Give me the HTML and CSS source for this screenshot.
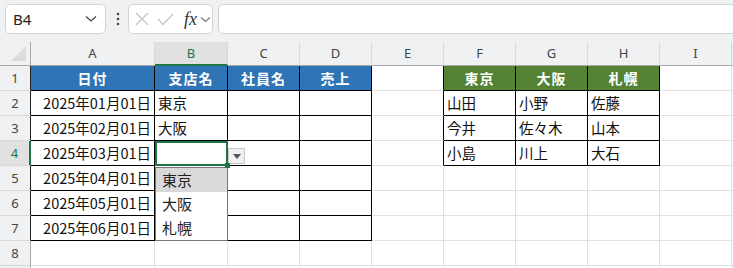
FILE: index.html
```html
<!DOCTYPE html>
<html lang="ja">
<head>
  <meta charset="UTF-8" />
  <title>Sheet</title>
  <link rel="stylesheet" href="styles.css">
</head>
<body>
  <!-- 数式バー -->
  <div class="toolbar">
    <div class="namebox">
      <span>B4</span>
      <svg width="12" height="8" viewBox="0 0 12 8"><polyline points="1,1.5 6,6 11,1.5" fill="none" stroke="#444" stroke-width="1.3"/></svg>
    </div>
    <svg class="dots" width="4" height="14" viewBox="0 0 4 14"><circle cx="2" cy="2" r="1.3" fill="#444"/><circle cx="2" cy="7" r="1.3" fill="#444"/><circle cx="2" cy="12" r="1.3" fill="#444"/></svg>
    <div class="fxbox">
      <svg width="14" height="14" viewBox="0 0 14 14"><path d="M1 1 L13 13 M13 1 L1 13" stroke="#c4c4c4" stroke-width="1.3" fill="none"/></svg>
      <svg width="17" height="13" viewBox="0 0 17 13"><polyline points="1,6 6,11.5 16,1" stroke="#c4c4c4" stroke-width="1.3" fill="none"/></svg>
      <span class="fx">fx</span>
      <svg width="11" height="7" viewBox="0 0 11 7"><polyline points="1,1.5 5.5,5.5 10,1.5" fill="none" stroke="#777" stroke-width="1.2"/></svg>
    </div>
    <div class="formula"></div>
  </div>

  <!-- シート -->
  <div class="sheet">
    <div class="hd corner"><span class="tri"></span></div>
    <div class="hd">A</div><div class="hd sel-col">B</div><div class="hd">C</div><div class="hd">D</div><div class="hd">E</div>
    <div class="hd">F</div><div class="hd">G</div><div class="hd">H</div><div class="hd">I</div><div class="hd"></div>

    <div class="rh tl">1</div>
    <div class="c tb blue">日付</div><div class="c tb blue">支店名</div><div class="c tb blue">社員名</div><div class="c tb blue">売上</div>
    <div class="c lb"></div>
    <div class="c tb green">東京</div><div class="c tb green">大阪</div><div class="c tb green">札幌</div>
    <div class="c"></div><div class="c"></div>

    <div class="rh tl">2</div>
    <div class="c tb num">2025年01月01日</div><div class="c tb">東京</div><div class="c tb"></div><div class="c tb"></div>
    <div class="c lb"></div>
    <div class="c tb">山田</div><div class="c tb">小野</div><div class="c tb">佐藤</div>
    <div class="c"></div><div class="c"></div>

    <div class="rh tl">3</div>
    <div class="c tb num">2025年02月01日</div><div class="c tb">大阪</div><div class="c tb"></div><div class="c tb"></div>
    <div class="c lb"></div>
    <div class="c tb">今井</div><div class="c tb">佐々木</div><div class="c tb">山本</div>
    <div class="c"></div><div class="c"></div>

    <div class="rh sel-row">4</div>
    <div class="c tb num">2025年03月01日</div>
    <div class="c tb active">
      <span class="selbox"></span>
      <span class="handle"></span>
      <span class="ddbtn"><svg width="8" height="5" viewBox="0 0 8 5"><polygon points="0,0 8,0 4,5" fill="#555"/></svg></span>
      <div class="ddlist">
        <div class="dditem hover">東京</div>
        <div class="dditem">大阪</div>
        <div class="dditem">札幌</div>
      </div>
    </div>
    <div class="c tb"></div><div class="c tb"></div>
    <div class="c lb"></div>
    <div class="c tb">小島</div><div class="c tb">川上</div><div class="c tb">大石</div>
    <div class="c"></div><div class="c"></div>

    <div class="rh tl">5</div>
    <div class="c tb num">2025年04月01日</div><div class="c tb"></div><div class="c tb"></div><div class="c tb"></div>
    <div class="c"></div><div class="c"></div><div class="c"></div><div class="c"></div><div class="c"></div><div class="c"></div>

    <div class="rh tl">6</div>
    <div class="c tb num">2025年05月01日</div><div class="c tb"></div><div class="c tb"></div><div class="c tb"></div>
    <div class="c"></div><div class="c"></div><div class="c"></div><div class="c"></div><div class="c"></div><div class="c"></div>

    <div class="rh tl">7</div>
    <div class="c tb num">2025年06月01日</div><div class="c tb"></div><div class="c tb"></div><div class="c tb"></div>
    <div class="c"></div><div class="c"></div><div class="c"></div><div class="c"></div><div class="c"></div><div class="c"></div>

    <div class="rh">8</div>
    <div class="c"></div><div class="c"></div><div class="c"></div><div class="c"></div><div class="c"></div>
    <div class="c"></div><div class="c"></div><div class="c"></div><div class="c"></div><div class="c"></div>

    <div class="rh"></div>
    <div class="c"></div><div class="c"></div><div class="c"></div><div class="c"></div><div class="c"></div>
    <div class="c"></div><div class="c"></div><div class="c"></div><div class="c"></div><div class="c"></div>
  </div>
</body>
</html>
```

FILE: styles.css
```css
* {
  margin: 0;
  padding: 0;
  box-sizing: border-box;
}

html, body {
  width: 100%;
  height: 100%;
  background: #fff;
  font-family: "Noto Sans", "Noto Sans CJK JP", sans-serif;
  overflow: hidden;
}

/* 数式バー */
.toolbar {
  height: 42px;
  background: #f0f1f3;
  display: flex;
  align-items: flex-start;
  padding: 4px 0 0 5px;
}

.namebox {
  width: 101px;
  height: 30px;
  background: #fff;
  border: 1px solid #d4d4d4;
  border-radius: 5px;
  display: flex;
  align-items: center;
  justify-content: space-between;
  padding: 0 8px 0 7px;
  font-size: 15px;
  color: #222;
}

.dots {
  margin: 8px 0 0 10px;
}

.fxbox {
  width: 85px;
  height: 30px;
  margin-left: 8px;
  background: #fff;
  border: 1px solid #d4d4d4;
  border-radius: 5px;
  display: flex;
  align-items: center;
  padding-left: 6px;
  gap: 8px;
}

.fxbox .fx {
  font-family: "Liberation Serif", serif;
  font-style: italic;
  font-size: 18px;
  color: #333;
  margin-left: 2px;
  margin-right: -5px;
}

.formula {
  flex: 1;
  height: 30px;
  margin-left: 5px;
  margin-right: -10px;
  background: #fff;
  border: 1px solid #d4d4d4;
  border-radius: 5px;
}

/* シート */
.sheet {
  display: grid;
  grid-template-columns: 31px 124px 73px repeat(7, 72px) 1fr;
  grid-template-rows: 24px;
  grid-auto-rows: 25px;
  font-family: "Noto Sans CJK JP", sans-serif;
  font-size: 14.5px;
  color: #111;
}

.hd {
  background: #f0f1f3;
  border-right: 1px solid #d8d8d8;
  border-bottom: 1px solid #a8a8a8;
  font-family: "Noto Sans", sans-serif;
  font-size: 13px;
  color: #444;
  text-align: center;
  line-height: 23px;
}

.hd.corner {
  position: relative;
  border-right-color: #a8a8a8;
}

.tri {
  position: absolute;
  right: 4px;
  bottom: 4px;
  width: 0;
  height: 0;
  border-left: 15px solid transparent;
  border-bottom: 15px solid #dcdcdc;
}

.hd.sel-col {
  background: #e1e1e1;
  border-bottom: 2px solid #217346;
  color: #217346;
}

.rh {
  background: #f0f1f3;
  border-right: 1px solid #a8a8a8;
  border-bottom: 1px solid #d8d8d8;
  font-family: "Noto Sans", sans-serif;
  font-size: 13px;
  color: #444;
  text-align: center;
  line-height: 24px;
}

.rh.tl {
  border-right-color: #222;
}

.rh.sel-row {
  background: #e1e1e1;
  border-right: 2px solid #217346;
  color: #217346;
}

.c {
  border-right: 1px solid #e1e1e1;
  border-bottom: 1px solid #e1e1e1;
  padding: 0 3px;
  line-height: 24px;
  white-space: nowrap;
}

.c.tb {
  border-right-color: #000;
  border-bottom-color: #000;
}

.c.lb {
  border-right-color: #000;
}

.num {
  text-align: right;
}

.blue,
.green {
  color: #fff;
  font-weight: bold;
  text-align: center;
  font-size: 14px;
  letter-spacing: 1px;
}

.blue {
  background: #2f75b5;
}

.green {
  background: #548235;
}

/* 選択セルとリスト */
.active {
  position: relative;
}

.selbox {
  position: absolute;
  left: 0;
  top: 0;
  right: -1px;
  bottom: -1px;
  border: 2px solid #217346;
}

.handle {
  position: absolute;
  right: -3px;
  bottom: -3px;
  width: 5px;
  height: 5px;
  background: #217346;
  z-index: 3;
}

.ddbtn {
  position: absolute;
  left: 73px;
  top: 7px;
  width: 17px;
  height: 16px;
  background: #f0f0f0;
  border: 1px solid #c6c6c6;
  display: flex;
  align-items: center;
  justify-content: center;
}

.ddlist {
  position: absolute;
  left: 0;
  top: 26px;
  width: 73px;
  height: 74px;
  background: #fff;
  border: 1px solid #777;
  z-index: 2;
}

.dditem {
  height: 24px;
  line-height: 24px;
  padding-left: 6px;
  font-size: 15px;
  color: #222;
}

.dditem.hover {
  background: #d9d9d9;
}
```
